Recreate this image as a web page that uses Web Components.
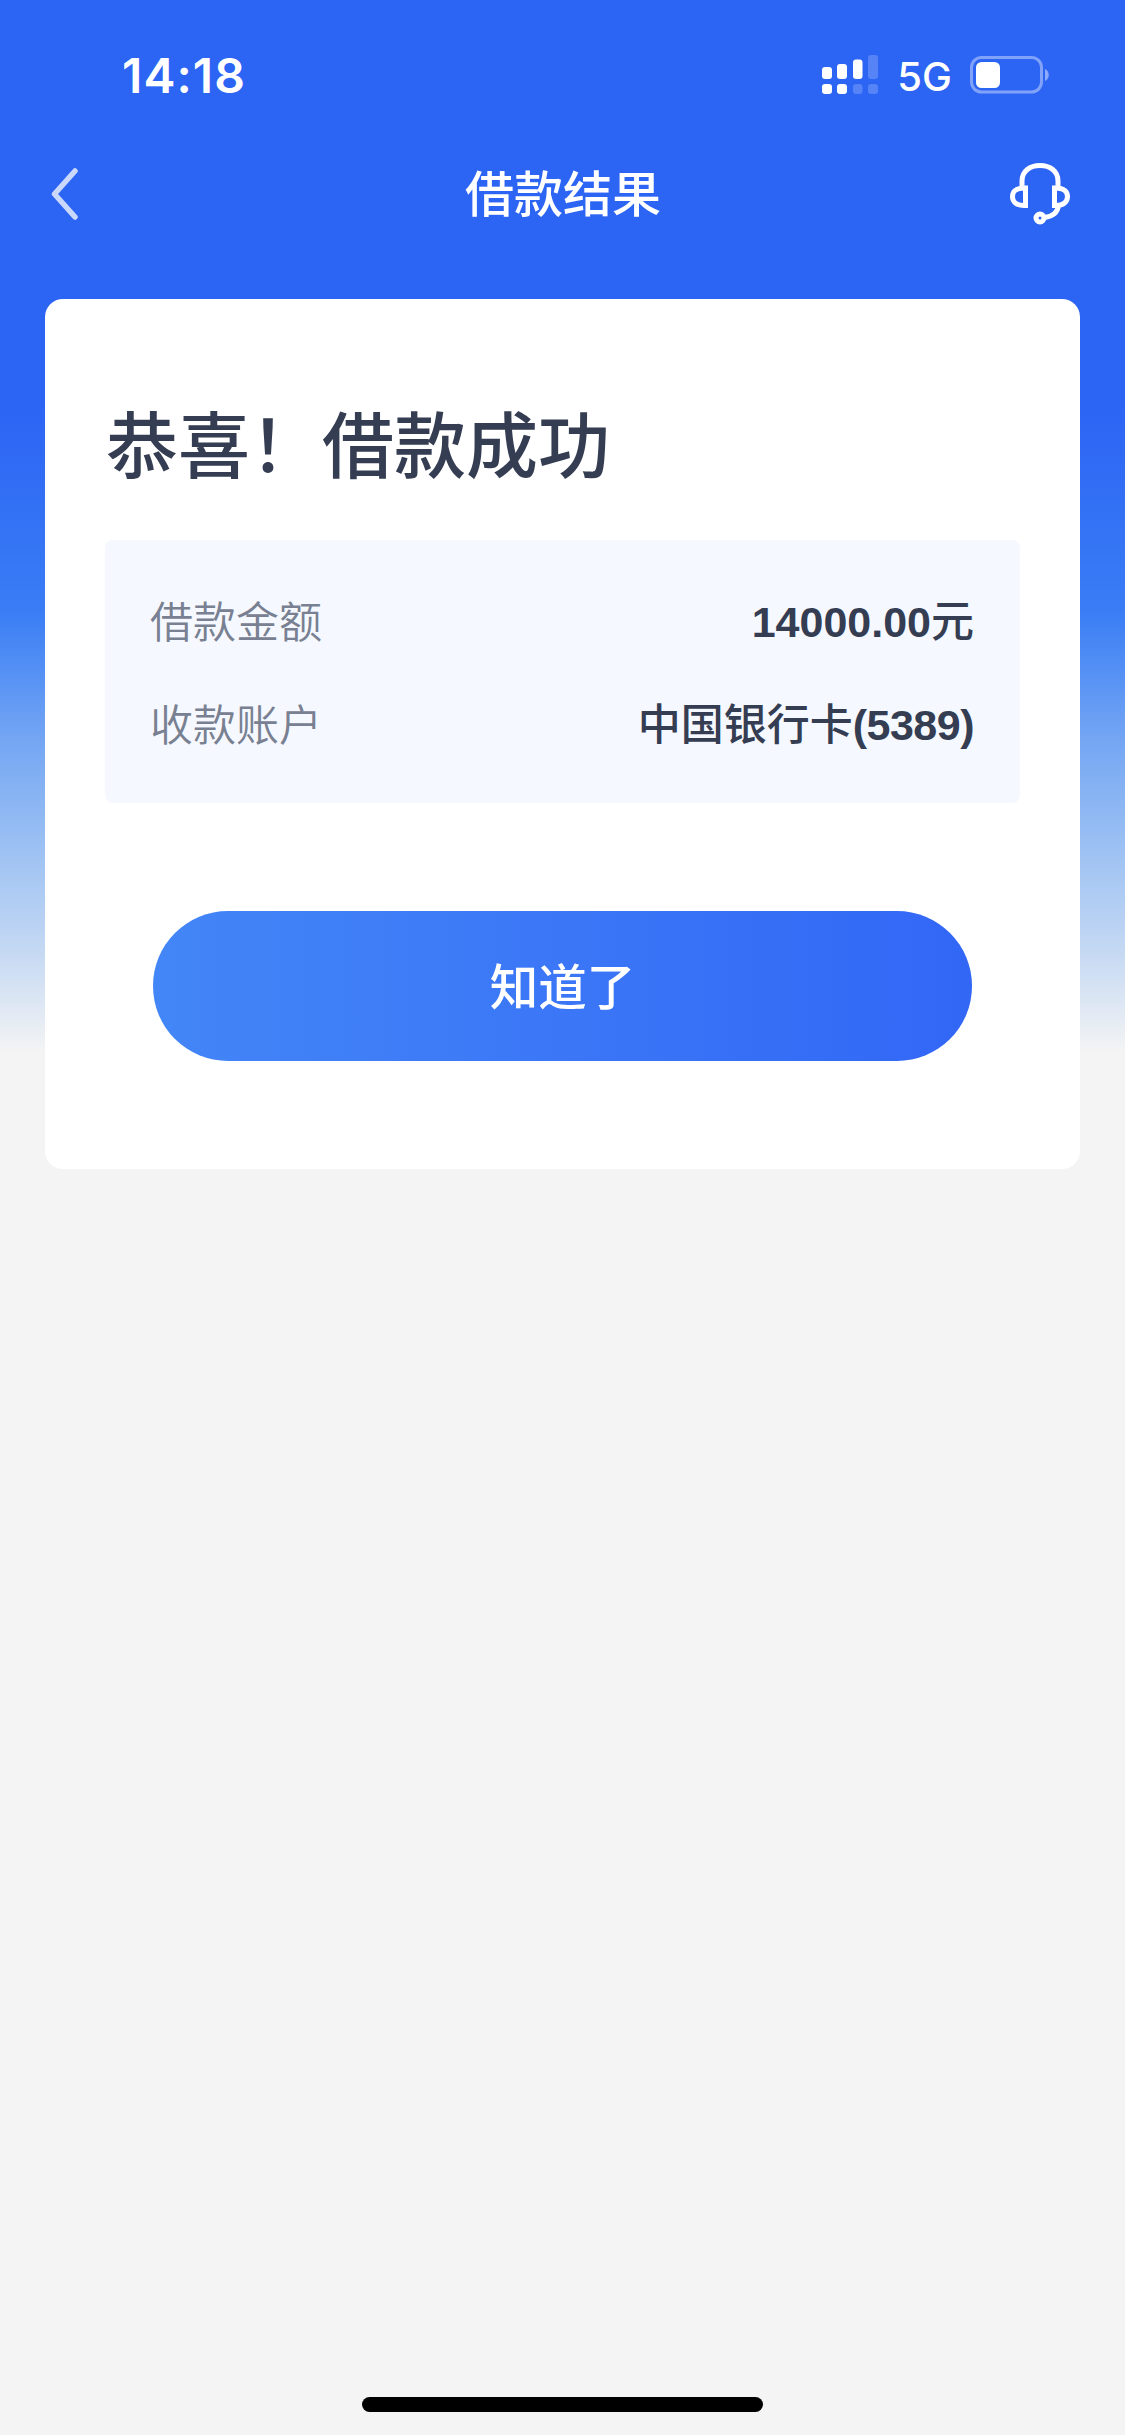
<!DOCTYPE html>
<html lang="zh-CN">
<head>
<meta charset="utf-8">
<meta name="viewport" content="width=device-width">
<title>借款结果</title>
<style>
html, body { margin: 0; height: 100%; background: #f4f4f4; }
body { font-family: "Liberation Sans", "Noto Sans CJK SC", sans-serif; }
</style>
</head>
<body>
<loan-page>
  <status-bar slot="top" time="14:18" network="5G"></status-bar>
  <nav-bar slot="top">借款结果</nav-bar>
  <result-card>
    <span slot="title">恭喜！借款成功</span>
    <info-row label="借款金额"><b>14000.00</b>元</info-row>
    <info-row label="收款账户">中国银行卡<b class="tight">(5389)</b></info-row>
    <pill-button slot="action">知道了</pill-button>
  </result-card>
</loan-page>
<script>
const define = (name, render) => customElements.define(name, class extends HTMLElement {
  constructor() {
    super();
    this.attachShadow({ mode: 'open' }).innerHTML = render(this);
  }
});

define('loan-page', () => `
<style>
:host { display: flex; flex-direction: column; width: 1125px; height: 2435px; box-sizing: border-box; overflow: hidden;
  background: linear-gradient(180deg, #2c64f4 405px, #397df5 610px, #74a6f3 740px, #99bff3 840px, #c2d7f3 945px, #f4f4f4 1052px); }
main { padding: 59px 45px 0; flex: 1; }
.home { width: 401px; height: 15px; border-radius: 8px; background: #000; margin: 0 auto 23px; }
</style>
<slot name="top"></slot>
<main><slot></slot></main>
<div class="home"></div>`);

define('status-bar', el => `
<style>
:host { display: flex; align-items: center; justify-content: space-between; height: 150px; box-sizing: border-box; padding: 0 75px 0 122px; color: #fff; font-family: Inter, sans-serif; }
.time { font-size: 48px; font-weight: 600; letter-spacing: 1.100px; line-height: 60px; padding-top: 1px; }
.right { display: flex; align-items: center; height: 60px; }
.net { font-size: 40px; line-height: 60px; font-weight: 450; margin: 4px 18px 0 18px; }
svg { display: block; }
</style>
<span class="time">${el.getAttribute('time')}</span>
<div class="right">
<svg width="57" height="42" viewBox="0 0 57 42" fill="#fff">
<rect x="0" y="13" width="10" height="12" rx="3"/><rect x="15" y="10" width="10" height="15" rx="3"/><rect x="31" y="5.500" width="9.500" height="19.500" rx="3"/><rect x="46" y="1" width="10" height="24" rx="3" opacity=".2"/>
<rect x="0" y="30" width="10" height="10" rx="3"/><rect x="15" y="30" width="10" height="10" rx="3"/><rect x="31" y="30" width="9.500" height="10" rx="3" opacity=".2"/><rect x="46" y="30" width="10" height="10" rx="3" opacity=".2"/>
</svg>
<span class="net">${el.getAttribute('network')}</span>
<svg width="80" height="38" viewBox="0 0 80 38">
<rect x="1.500" y="1.500" width="70" height="34.500" rx="10" fill="none" stroke="#fff" stroke-opacity=".4" stroke-width="3"/>
<rect x="6" y="6" width="24" height="26" rx="5.500" fill="#fff"/>
<path d="M75 13c5 2 5 10 0 12z" fill="#fff" fill-opacity=".45"/>
</svg>
</div>`);

define('nav-bar', () => `
<style>
:host { display: grid; grid-template-columns: 1fr auto 1fr; align-items: center; height: 90px; padding: 0 52px 0 51px; color: #fff; }
h1 { margin: 0; padding-left: 2px; font-size: 49px; font-weight: 500; line-height: 90px; }
.service { justify-self: end; margin-bottom: 7px; }
.back { margin-bottom: 3px; }
svg { display: block; }
</style>
<svg class="back" width="30" height="54" viewBox="0 0 30 54"><path d="M24 4L3.500 27 24 50" fill="none" stroke="#fff" stroke-opacity=".75" stroke-width="5.500" stroke-linecap="round" stroke-linejoin="round"/></svg>
<h1><slot></slot></h1>
<svg class="service" width="66" height="66" viewBox="0 0 66 66" fill="none" stroke="#fff" stroke-width="5"><path d="M15 29V22C15 12 23 6.500 33 6.500S51 12 51 22v7M18.500 46.500H17C9 46.500 5.500 42.500 5.500 37.500S9 29 17 29h1.500zM47.500 46.500H49c8 0 11.500-4 11.500-9S57 29 49 29h-1.500zM51.500 46.500C50.500 54 45.500 57.500 37.500 58.500"/><circle cx="33" cy="59" r="4"/></svg>`);

define('result-card', () => `
<style>
:host { display: flex; flex-direction: column; height: 870px; box-sizing: border-box; padding: 87px 60px 0; background: #fff; border-radius: 18px; color: #343d52; }
h2 { margin: 0 0 44px; padding-left: 1px; font-size: 72px; line-height: 110px; font-weight: 500; font-family: "Noto Sans CJK SC", sans-serif; }
.info { display: flex; flex-direction: column; height: 263px; box-sizing: border-box; padding: 28px 46px 29px 45px; background: #f5f8ff; border-radius: 8px; }
.action { display: flex; flex-direction: column; margin: 108px 48px 0; }
</style>
<h2><slot name="title"></slot></h2>
<div class="info"><slot></slot></div>
<div class="action"><slot name="action"></slot></div>`);

define('info-row', el => `
<style>
:host { display: flex; justify-content: space-between; align-items: center; height: 103px; font-size: 43px; line-height: 60px; }
.label { color: #788091; font-weight: 350; padding-bottom: 2px; font-family: "Noto Sans CJK SC", sans-serif; }
.value { font-weight: 500; padding-top: 4px; }
::slotted(b) { font-weight: 700; }
::slotted(b.tight) { letter-spacing: -.5px; }
</style>
<span class="label">${el.getAttribute('label')}</span><span class="value"><slot></slot></span>`);

define('pill-button', () => `
<style>
:host { display: block; }
button { display: flex; align-items: center; justify-content: center; width: 100%; height: 150px; border: 0; padding: 0 0 4px; border-radius: 75px; background: linear-gradient(90deg, #4386f7, #3267f6); color: #fff; font: 500 48.500px/70px "Noto Sans CJK SC", sans-serif; }
</style>
<button><slot></slot></button>`);
</script>
</body>
</html>
